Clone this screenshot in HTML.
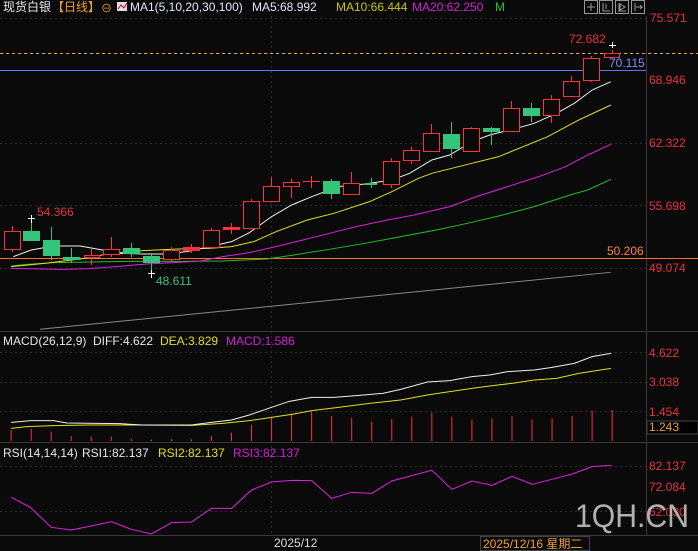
<!DOCTYPE html>
<html><head><meta charset="utf-8"><style>
body{margin:0;background:#0a0a0a;width:698px;height:551px;overflow:hidden;font-family:"Liberation Sans","Noto Sans CJK SC",sans-serif}
svg{position:absolute;left:0;top:0}
text{font-family:"Liberation Sans","Noto Sans CJK SC",sans-serif}
</style></head><body>
<svg width="698" height="551" viewBox="0 0 698 551">
<rect width="698" height="551" fill="#0a0a0a"/>
<g stroke="#2e2e2e" stroke-dasharray="2,3" stroke-width="1">
<line x1="0" y1="18.5" x2="646" y2="18.5"/>
<line x1="0" y1="143.5" x2="646" y2="143.5"/>
<line x1="0" y1="205.5" x2="646" y2="205.5"/>
<line x1="0" y1="268.5" x2="646" y2="268.5"/>
<line x1="0" y1="352.5" x2="646" y2="352.5"/>
<line x1="0" y1="382.5" x2="646" y2="382.5"/>
<line x1="0" y1="411.5" x2="646" y2="411.5"/>
<line x1="0" y1="466.5" x2="646" y2="466.5"/>
<line x1="0" y1="511.5" x2="646" y2="511.5"/>
<line x1="271.5" y1="16" x2="271.5" y2="535"/>
</g>
<g stroke="#3a3a3a">
<line x1="646.5" y1="16" x2="646.5" y2="535"/>
<line x1="0" y1="331.5" x2="698" y2="331.5"/>
<line x1="0" y1="442.5" x2="698" y2="442.5"/>
<line x1="0" y1="535.5" x2="698" y2="535.5"/>
</g>
<text x="3" y="11" font-size="12" fill="#e8e8e8">现货白银</text>
<text x="52" y="11" font-size="12" fill="#f0a030">【日线】</text>
<text x="101" y="12" font-size="11" fill="#f0a030">⊖</text>
<rect x="117" y="2" width="10" height="9" fill="#dde" />
<polyline points="118,9 121,5 124,8 127,3" stroke="#c00" fill="none"/>
<text x="130" y="11" font-size="12" fill="#e0e8ff">MA1(5,10,20,30,100)</text>
<text x="252" y="11" font-size="12" fill="#e0e8ff">MA5:68.992</text>
<text x="336" y="11" font-size="12" fill="#c8c800">MA10:66.444</text>
<text x="412" y="11" font-size="12" fill="#d020d0">MA20:62.250</text>
<text x="495" y="11" font-size="12" fill="#20c040">M</text>
<g stroke="#999" fill="none">
<rect x="584.5" y="0.5" width="13" height="13"/><rect x="599.5" y="0.5" width="13" height="13"/>
<rect x="615.5" y="0.5" width="13" height="13"/><rect x="631.5" y="0.5" width="13" height="13"/>
<path d="M591 3v8M587 7h8M603 3v8h7M606 4v5M619 3v8h7M620 4l5 3-5 3zM635 3v8M636 7h6l-2-2M640 9l2-2"/>
</g>
<g font-size="12" fill="#e83040">
<text x="650" y="22">75.571</text>
<text x="649" y="84">68.946</text>
<text x="649" y="147">62.322</text>
<text x="649" y="210">55.698</text>
<text x="649" y="272">49.074</text>
<text x="569" y="43">72.682</text>
<text x="37" y="216">54.366</text>
</g>
<text x="609" y="67" font-size="12" fill="#8090ff">70.115</text>
<text x="607" y="255" font-size="12" fill="#ff8040">50.206</text>
<text x="156" y="285" font-size="12" fill="#35c47c">48.611</text>
<line x1="0" y1="53.5" x2="698" y2="53.5" stroke="#f0a030" stroke-dasharray="3,3"/>
<line x1="0" y1="70.5" x2="646" y2="70.5" stroke="#6070ff"/>
<line x1="0" y1="258.5" x2="698" y2="258.5" stroke="#ff7030"/>
<g transform="translate(0,80) scale(0.4452,0.3333)" fill="none" stroke-width="1">
<polyline vector-effect="non-scaling-stroke" stroke="#888" points="90,748 1372,577"/>
<polyline vector-effect="non-scaling-stroke" stroke="#20c020" points="25,558 60,553 120,548 200,546 300,544 400,544 500,543 600,537 660,525 740,508 820,490 900,470 980,450 1050,430 1120,408 1200,380 1280,345 1320,330 1372,298"/>
<polyline vector-effect="non-scaling-stroke" stroke="#e020e0" points="25,565 140,568 200,566 260,560 330,552 400,547 450,543 500,530 560,518 620,500 680,480 740,460 800,440 870,420 930,405 1010,380 1070,350 1140,320 1210,290 1270,260 1320,225 1372,193"/>
<polyline vector-effect="non-scaling-stroke" stroke="#e0e020" points="25,560 100,550 180,537 250,520 320,512 400,507 470,505 520,500 570,485 620,455 690,420 750,400 830,365 880,335 940,295 970,280 1060,250 1120,230 1230,170 1300,120 1372,75"/>
<polyline vector-effect="non-scaling-stroke" stroke="#f0f0f0" points="30,530 70,510 120,498 180,498 230,510 270,520 320,522 370,522 420,515 470,500 520,485 560,458 610,410 655,375 700,350 760,320 820,312 880,300 920,280 970,240 1010,225 1060,185 1100,165 1160,145 1200,130 1250,100 1290,70 1330,30 1372,5"/>
</g>
<g stroke="#ff3040" fill="#0a0a0a">
<line x1="12.5" y1="226" x2="12.5" y2="252"/><rect x="4.5" y="231.5" width="16" height="18"/>
<line x1="91.5" y1="249" x2="91.5" y2="265"/><rect x="84.5" y="255.5" width="15" height="2"/>
<line x1="111.5" y1="237" x2="111.5" y2="257"/><rect x="103.5" y="249.5" width="16" height="5"/>
<line x1="171.5" y1="247" x2="171.5" y2="262"/><rect x="163.5" y="250.5" width="16" height="9"/>
<line x1="191.5" y1="244" x2="191.5" y2="253"/><rect x="183.5" y="247.5" width="16" height="3" fill="#ff3040"/>
<line x1="211.5" y1="228" x2="211.5" y2="249"/><rect x="203.5" y="230.5" width="16" height="17"/>
<line x1="231.5" y1="223" x2="231.5" y2="234"/><rect x="223.5" y="227.5" width="16" height="2" fill="#ff3040"/>
<line x1="251.5" y1="199" x2="251.5" y2="229"/><rect x="243.5" y="201.5" width="16" height="27"/>
<line x1="271.5" y1="177" x2="271.5" y2="202"/><rect x="263.5" y="186.5" width="16" height="15"/>
<line x1="291.5" y1="179" x2="291.5" y2="198"/><rect x="283.5" y="182.5" width="16" height="4"/>
<line x1="311.5" y1="176" x2="311.5" y2="188"/><line x1="303" y1="181.5" x2="320" y2="181.5"/>
<line x1="351.5" y1="172" x2="351.5" y2="195"/><rect x="343.5" y="183.5" width="16" height="11"/>
<line x1="391.5" y1="158" x2="391.5" y2="188"/><rect x="383.5" y="161.5" width="16" height="23"/>
<line x1="411.5" y1="147" x2="411.5" y2="164"/><rect x="403.5" y="150.5" width="16" height="10"/>
<line x1="431.5" y1="124" x2="431.5" y2="152"/><rect x="423.5" y="133.5" width="16" height="18"/>
<line x1="471.5" y1="127" x2="471.5" y2="152"/><rect x="463.5" y="128.5" width="16" height="23"/>
<line x1="511.5" y1="101" x2="511.5" y2="132"/><rect x="503.5" y="108.5" width="16" height="23"/>
<line x1="551.5" y1="95" x2="551.5" y2="123"/><rect x="543.5" y="99.5" width="16" height="16"/>
<line x1="571.5" y1="76" x2="571.5" y2="97"/><rect x="563.5" y="81.5" width="16" height="15"/>
<line x1="591.5" y1="56" x2="591.5" y2="82"/><rect x="583.5" y="58.5" width="16" height="22"/>
<rect x="604.5" y="53.5" width="15" height="4"/><line x1="612.5" y1="50" x2="612.5" y2="54"/>
</g>
<g stroke="#fff"><path d="M31.5 215v8M28 218.5h7M151.5 270v8M148 273.5h7M612.5 42v6M609 45.5h7"/></g>
<g stroke="#35c47c" fill="#35c47c">
<line x1="31.5" y1="223" x2="31.5" y2="241"/><rect x="23.5" y="231.5" width="16" height="9"/>
<line x1="51.5" y1="227" x2="51.5" y2="260"/><rect x="43.5" y="240.5" width="16" height="15"/>
<line x1="71.5" y1="248" x2="71.5" y2="263"/><rect x="63.5" y="257.5" width="16" height="2"/>
<line x1="131.5" y1="243" x2="131.5" y2="257"/><rect x="123.5" y="248.5" width="16" height="5"/>
<line x1="151.5" y1="253" x2="151.5" y2="270"/><rect x="143.5" y="256.5" width="16" height="6"/>
<line x1="331.5" y1="179" x2="331.5" y2="199"/><rect x="323.5" y="181.5" width="16" height="12"/>
<line x1="371.5" y1="178" x2="371.5" y2="188"/><rect x="365.5" y="183.5" width="11" height="1"/>
<line x1="451.5" y1="122" x2="451.5" y2="158"/><rect x="443.5" y="134.5" width="16" height="14"/>
<line x1="491.5" y1="127" x2="491.5" y2="145"/><rect x="483.5" y="128.5" width="16" height="3"/>
<line x1="531.5" y1="103" x2="531.5" y2="122"/><rect x="523.5" y="108.5" width="16" height="7"/>
</g>
<text x="3" y="345" font-size="12" fill="#e8e8e8">MACD(26,12,9)</text>
<text x="93" y="345" font-size="12" fill="#e8e8e8">DIFF:4.622</text>
<text x="160" y="345" font-size="12" fill="#e0e020">DEA:3.829</text>
<text x="226" y="345" font-size="12" fill="#d020d0">MACD:1.586</text>
<g font-size="12" fill="#e83040">
<text x="649" y="357">4.622</text><text x="649" y="386">3.038</text><text x="649" y="416">1.454</text>
</g>
<rect x="647" y="421" width="51" height="13" fill="#000" stroke="#444"/>
<text x="649" y="431" font-size="12" fill="#f0a030">1.243</text>
<g transform="translate(0,330) scale(0.4452,0.3333)">
<g stroke="#ff3040" stroke-width="2.2">
<path d="M25 333V300M70 333V297M115 333V305M160 333V318M205 333V320M250 333V320M295 333V326M475 333V318M520 333V308M565 333V285M610 333V262M655 333V250M700 333V245M745 333V258M790 333V263M835 333V275M880 333V267M925 333V260M970 333V248M1015 333V260M1060 333V268M1105 333V265M1150 333V258M1195 333V268M1240 333V265M1285 333V258M1330 333V242M1375 333V240"/>
</g>
<g stroke="#35c47c" stroke-width="2.2"><path d="M340 333V329M385 333V328M430 333V328"/></g>
<polyline vector-effect="non-scaling-stroke" fill="none" stroke="#e0e020" points="25,295 60,290 120,287 200,285 300,285 430,286 500,280 560,272 610,262 660,252 700,242 760,232 830,220 900,210 960,195 1010,185 1060,175 1100,168 1150,160 1200,150 1250,145 1300,130 1372,115"/>
<polyline vector-effect="non-scaling-stroke" fill="none" stroke="#f0f0f0" points="25,277 70,272 120,272 150,279 270,281 320,285 430,285 470,278 520,270 560,255 610,232 650,214 700,202 750,202 800,197 860,190 900,178 960,156 1010,152 1060,140 1100,135 1140,125 1200,120 1240,112 1290,100 1330,80 1372,70"/>
<polyline vector-effect="non-scaling-stroke" fill="none" stroke="#e020e0" points="25,502 68,532 115,592 160,600 205,588 250,575 295,598 340,612 385,578 430,576 475,535 520,535 565,480 610,456 655,451 700,452 745,505 790,487 835,490 880,453 925,437 970,421 1015,478 1060,453 1105,466 1150,439 1195,463 1240,448 1285,432 1330,410 1372,406"/>
</g>
<text x="3" y="457" font-size="12" fill="#e8e8e8">RSI(14,14,14)</text>
<text x="82" y="457" font-size="12" fill="#e8e8e8">RSI1:82.137</text>
<text x="158" y="457" font-size="12" fill="#e0e020">RSI2:82.137</text>
<text x="233" y="457" font-size="12" fill="#d020d0">RSI3:82.137</text>
<g font-size="12" fill="#e83040">
<text x="649" y="470">82.137</text><text x="649" y="491">72.084</text><text x="649" y="516">62.030</text>
</g>
<text x="575" y="527" font-size="32" fill="#cfcfcf" fill-opacity="0.85" textLength="114" lengthAdjust="spacingAndGlyphs">1QH.CN</text>
<text x="274" y="547" font-size="12" fill="#ddd">2025/12</text>
<rect x="480.5" y="536.5" width="109" height="14" fill="#0a0a0a" stroke="#444"/>
<text x="483" y="548" font-size="12" fill="#f0a030">2025/12/16 星期二</text>
</svg>
</body></html>
